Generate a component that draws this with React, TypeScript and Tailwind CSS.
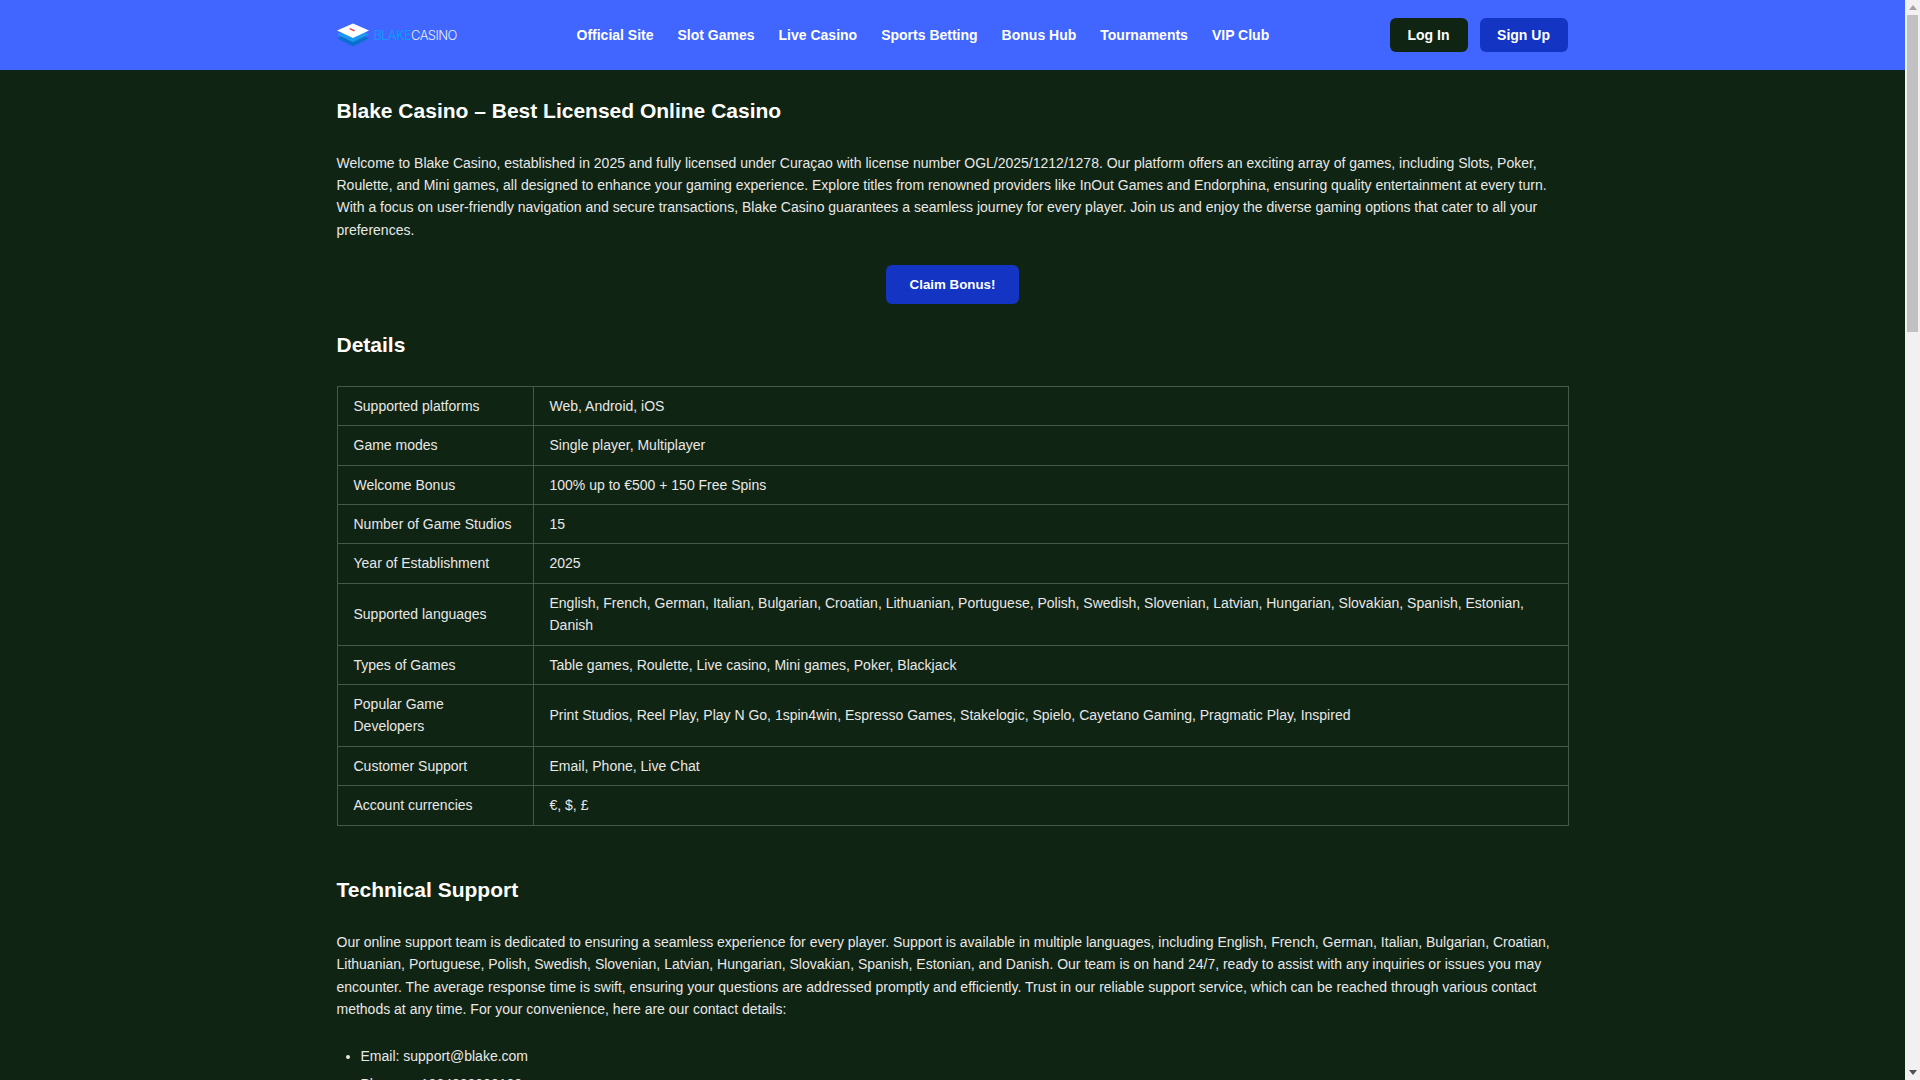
import React from "react";

const nav = ["Official Site", "Slot Games", "Live Casino", "Sports Betting", "Bonus Hub", "Tournaments", "VIP Club"];
const rows: [string, string][] = [
  ["Supported platforms", "Web, Android, iOS"],
  ["Game modes", "Single player, Multiplayer"],
  ["Welcome Bonus", "100% up to €500 + 150 Free Spins"],
  ["Number of Game Studios", "15"],
  ["Year of Establishment", "2025"],
  ["Supported languages", "English, French, German, Italian, Bulgarian, Croatian, Lithuanian, Portuguese, Polish, Swedish, Slovenian, Latvian, Hungarian, Slovakian, Spanish, Estonian, Danish"],
  ["Types of Games", "Table games, Roulette, Live casino, Mini games, Poker, Blackjack"],
  ["Popular Game Developers", "Print Studios, Reel Play, Play N Go, 1spin4win, Espresso Games, Stakelogic, Spielo, Cayetano Gaming, Pragmatic Play, Inspired"],
  ["Customer Support", "Email, Phone, Live Chat"],
  ["Account currencies", "€, $, £"],
];

function Logo() {
  return (
    <div className="flex w-[122px] shrink-0 items-center gap-[5px]">
      <svg width="32" height="24" viewBox="0 0 32 24" className="shrink-0">
        <path d="M0 15.5 L16 8 L32 15.5 L16 23.5 Z" fill="#0b6fd0" />
        <path d="M0 11.5 L16 4 L32 11.5 L16 19 Z" fill="#1e98ee" />
        <path d="M0 7.5 L16 0.5 L32 7.5 L16 15 Z" fill="#ffffff" />
        <path d="M13 5 L18 7.2 L17.2 8.4 L12.4 6.2 Z" fill="#e8404a" />
      </svg>
      <span className="font-['Inter',sans-serif] text-[13px] font-light leading-none tracking-[-0.62px]">
        <span className="text-[#00a4ff]">BLAKE</span>
        <span className="text-[#e8edff]">CASINO</span>
      </span>
    </div>
  );
}

function Scrollbar() {
  return (
    <div className="flex h-full w-[15px] shrink-0 flex-col items-center bg-[#f1f1f1]">
      <div className="flex h-[15px] w-full items-center justify-center">
        <svg width="8" height="5" viewBox="0 0 8 5"><path d="M4 0 L8 5 L0 5 Z" fill="#a3a3a3" /></svg>
      </div>
      <div className="h-[317px] w-[11px] bg-[#c1c1c1]" />
      <div className="flex-1" />
      <div className="flex h-[15px] w-full items-center justify-center">
        <svg width="8" height="5" viewBox="0 0 8 5"><path d="M4 5 L8 0 L0 0 Z" fill="#505050" /></svg>
      </div>
    </div>
  );
}

export default function App() {
  return (
    <div className="flex h-screen overflow-hidden bg-[#102413] text-[14px] leading-[22.4px] text-[#e8e8e8] font-['Liberation_Sans',Arial,sans-serif]">
      <div className="min-w-0 flex-1 overflow-hidden">
        <header className="h-[70px] bg-[#4066ff]">
          <div className="mx-auto flex h-full w-[1232px] items-center">
            <Logo />
            <nav className="ml-[118px] flex gap-6">
              {nav.map((n) => (
                <a key={n} className="font-bold text-white">{n}</a>
              ))}
            </nav>
            <div className="ml-auto mr-[1px] flex gap-3">
              <button className="h-[34px] w-[78px] rounded-md bg-[#102413] font-bold text-white">Log In</button>
              <button className="h-[34px] w-[88px] rounded-md bg-[#1434c4] font-bold text-white">Sign Up</button>
            </div>
          </div>
        </header>
        <main className="mx-auto w-[1232px]">
          <h1 className="mt-[27px] text-[21px] font-bold leading-[28px] text-white">Blake Casino – Best Licensed Online Casino</h1>
          <p className="mt-[26.6px]">
            Welcome to Blake Casino, established in 2025 and fully licensed under Curaçao with license number OGL/2025/1212/1278. Our platform offers an exciting array of games, including Slots, Poker, Roulette, and Mini games, all designed to enhance your gaming experience. Explore titles from renowned providers like InOut Games and Endorphina, ensuring quality entertainment at every turn. With a focus on user-friendly navigation and secure transactions, Blake Casino guarantees a seamless journey for every player. Join us and enjoy the diverse gaming options that cater to all your preferences.
          </p>
          <div className="mt-[23.4px] flex justify-center">
            <button className="h-[39px] w-[133px] rounded-md bg-[#1434c4] pt-[2px] text-[13.3333px] font-bold text-white">Claim Bonus!</button>
          </div>
          <h2 className="mt-[27px] text-[21px] font-bold leading-[28px] text-white">Details</h2>
          <table className="mt-[27.1px] w-full border-collapse">
            <tbody>
              {rows.map(([a, b]) => (
                <tr key={a}>
                  <td className="w-[196px] border border-[#47584a] px-4 py-2">{a}</td>
                  <td className="border border-[#47584a] px-4 py-2">{b}</td>
                </tr>
              ))}
            </tbody>
          </table>
          <h2 className="mt-[50px] text-[21px] font-bold leading-[28px] text-white">Technical Support</h2>
          <p className="mt-[27.4px]">
            Our online support team is dedicated to ensuring a seamless experience for every player. Support is available in multiple languages, including English, French, German, Italian, Bulgarian, Croatian, Lithuanian, Portuguese, Polish, Swedish, Slovenian, Latvian, Hungarian, Slovakian, Spanish, Estonian, and Danish. Our team is on hand 24/7, ready to assist with any inquiries or issues you may encounter. The average response time is swift, ensuring your questions are addressed promptly and efficiently. Trust in our reliable support service, which can be reached through various contact methods at any time. For your convenience, here are our contact details:
          </p>
          <ul className="mt-[24.6px] list-disc pl-6">
            <li className="mb-[5px]">Email: support@blake.com</li>
            <li>Phone: + 1804800000100</li>
          </ul>
        </main>
      </div>
      <Scrollbar />
    </div>
  );
}
